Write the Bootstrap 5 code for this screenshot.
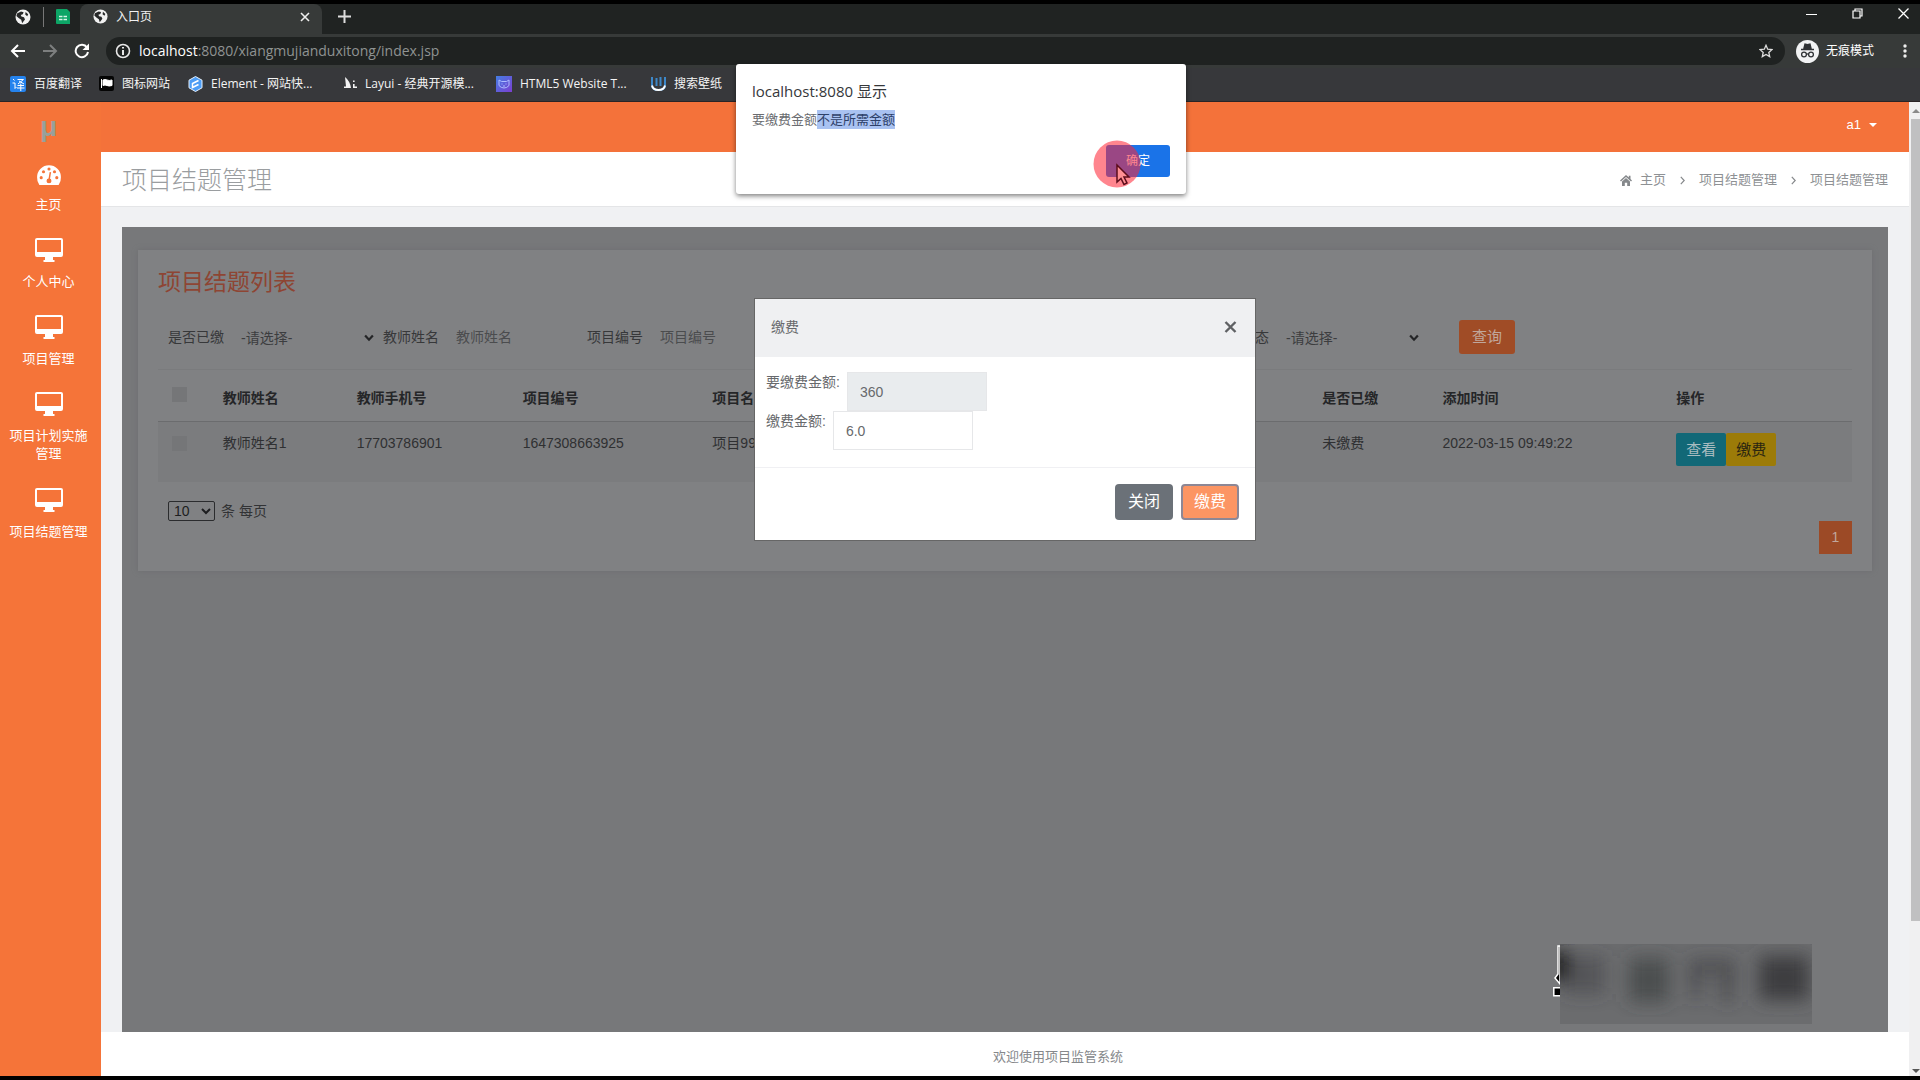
<!DOCTYPE html>
<html lang="zh-CN">
<head>
<meta charset="utf-8">
<meta name="viewport" content="width=device-width, initial-scale=1">
<title>入口页</title>
<link rel="stylesheet" href="https://cdn.jsdelivr.net/npm/bootstrap@5.3.0/dist/css/bootstrap.min.css">
<style>
body{font:14px/20px "Liberation Sans","Noto Sans CJK SC",sans-serif;color:#67696c;background:#000;height:100vh;padding:4px 0;overflow:hidden}
a{text-decoration:none;color:inherit}
svg{flex:none;display:block}
.ui-font{font-family:"Open Sans","Noto Sans CJK SC",sans-serif}
/* browser frame */
.tabstrip{height:30px;background:#202322}
.pinned{width:80px;gap:12px;padding:0 0 5px 15px}
.pinned hr{width:1px;height:20px;margin:0;background:#777;border:0;opacity:1}
.tab-active{width:242px;background:#373a39;border-radius:8px 8px 0 0;padding:0 10px 5px 13px;color:#f2f2f2;font-size:12px}
.icon-btn{background:none;border:0;padding:0;color:#fff;line-height:1}
.new-tab{padding:0 16px 5px}
.win-btns{gap:35px;padding-right:11px}
.toolbar{height:34px;background:#373a39;padding:3px 10px 3px;gap:16px}
.address{height:28px;border-radius:14px;background:#1f2221;padding:0 12px 0 9px;gap:8px;margin-right:-5px}
.url{font-size:14px;color:#8f9392}
.url b{font-weight:400;color:#fff}
.incog{font-size:12px;color:#fff;width:88px;gap:7px}
.bookmarks{height:34px;background:#37383b;font-size:12px;color:#f4f4f4;padding:0 10px 2px;border-bottom:1px solid #2a2426}
.bookmarks a{display:flex;align-items:center;gap:8px;white-space:nowrap}
/* application */
.app-main{background:#f0f1f3}
.side{width:101px;background:#f57439;color:#fff;font-size:13px;line-height:18px;text-align:center}
.side .logo-mu{font:bold 28px/32px "Liberation Sans",sans-serif;color:#98a09b;height:52px;padding-right:4px;padding-top:9px}
.side a{display:flex;flex-direction:column;align-items:center;gap:11px;height:77px;padding:9px 9px 0 5px}
.side a.home-link{height:75px}
.side a.two-line{height:96px}
.topbar{height:50px;background:#f4723a;padding:0 32px 4px 0;color:#fff;font-size:13px}
.pagehead{height:55px;background:#fff;padding:2px 21px 0;border-bottom:1px solid #e4e5e7}
.pagehead h1{font-size:25px;font-weight:300;color:#9a9da0;margin:0;line-height:36px}
.crumbs{font-size:13px;color:#8e9194;gap:14px}
.stage{background:#77787a;margin:20px 21px 0;padding:23px 16px}
.panel{background:#808183;height:321px;padding:18px 20px;box-shadow:0 0 5px #6d6e70}
.panel h2{font-size:23px;line-height:28px;color:#8e4533;margin:0 0 24px;font-weight:400}
.filters{padding-left:10px;height:34px;color:#37383a;white-space:nowrap}
.filters label{width:62px}
.filters input,.filters select{background:transparent;border:0;color:#3c3d3f;padding:0 11px;height:34px;width:142px;border-radius:0;outline:0}
.filters input::placeholder{color:#4b4c4e;opacity:1}
.filters .pick{position:relative}
.filters select{width:153px;appearance:none;padding-top:2px}
.filters .pick svg{position:absolute;right:9px;top:14px;pointer-events:none}
.filters .last-field{margin-left:422px}
.btn-main{background:#a04c26;color:#c0a79c;border:0;border-radius:3px;font-size:15px;line-height:22px;width:56px;height:34px;padding:0;margin-left:31px}
.btn-main:hover{background:#a04c26;color:#c0a79c}
.grid-table{table-layout:fixed;margin:15px 0 0;color:#2f3032;--bs-table-bg:transparent;--bs-table-color:#2f3032}
.grid-table>:not(caption)>*>*{padding:11px 12px 14px 14px;border:0;box-shadow:none;background:none;vertical-align:top}
.grid-table thead tr{height:52px;border-top:1px solid #7a7b7d;border-bottom:1px solid #6b6c6e}
.grid-table thead th{padding:18px 12px 13px 14px;color:#252628;font-weight:700}
.grid-table tbody tr{height:60px;background:#7b7c7e}
.tick{appearance:none;width:15px;height:15px;background:#757678;display:block;margin:3px 0 0}
.grid-table thead .tick{margin-top:-1px}
.act{border:0;font-size:15px;line-height:20px;padding:6px 10px;border-radius:2px;float:left;width:50px;height:33px}
.act-view{background:#126877;color:#a9bcc0}
.act-pay{background:#9c7b08;color:#2a2511}
.per-page{padding:19px 0 0 10px;gap:6px;color:#323335;height:39px}
.per-page select{width:47px;height:20px;font-size:14px;line-height:18px;padding:0 0 0 1px;background:transparent;border:1px solid #2b2c2e;border-radius:2px;color:#1d1e20}
.pager a{width:33px;height:33px;background:#9c4a26;color:#c0a79c}
.foot{height:44px;background:#fff;font-size:13px;color:#85888b;padding:5px 0 0 106px}
.sbar{width:11px;background:#f0f0f1;padding-left:2px}
.sbar .thumb{height:802px;background:#c0c0c1}
/* layers over the page */
.pay-modal{position:absolute;left:50%;top:196px;width:502px;margin-left:-251px;background:#fff;border:1px solid #666}
.pay-head{height:58px;background:#eff0f2;padding:0 18px 2px 16px}
.pay-body{padding:15px 11px 0;height:110px}
.pay-body label{white-space:nowrap;font-size:14px}
.pay-row{height:39px;gap:7px}
.pay-body input{width:140px;height:39px;border:1px solid #e6e7e9;padding:0 12px;color:#67696c;background:#fff;border-radius:0}
.pay-body input[readonly]{background:#e9ecee}
.pay-foot{border-top:1px solid #f0f0f3;height:73px;padding:16px 16px 0;gap:8px}
.pay-foot .btn{width:58px;height:36px;font-size:16px;line-height:22px;padding:0;border-radius:4px;color:#fff}
.b-close,.pay-foot .b-close:hover{background:#6b7178}
.b-pay,.pay-foot .b-pay:hover{background:#fc9563;border:2px solid #8d8795}
.alert-box{position:absolute;left:50%;top:64px;width:450px;height:130px;margin-left:-224px;background:#fff;border-radius:3px;padding:15px 16px 17px;box-shadow:0 2px 5px rgba(0,0,0,.5);z-index:5}
.alert-box h3{font-size:15px;line-height:24px;color:#35373a;margin:0 0 7px;font-weight:400}
.alert-box p{font-size:13px;line-height:19px;margin:0;color:#6a6c70}
.alert-box p span{background:#a9c2f1;color:#2d4068;display:inline-block}
.b-ok{width:64px;height:32px;background:#1a73e8;color:#fff;border:0;border-radius:3px;font-size:12px}
.click-dot{position:absolute;left:357px;top:76px}
.smudge{position:absolute;right:76px;bottom:8px}
</style>
<script src="https://cdn.jsdelivr.net/npm/bootstrap@5.3.0/dist/js/bootstrap.bundle.min.js"></script>
</head>
<body class="d-flex flex-column">
<svg width="0" height="0" class="position-absolute"><defs>
<symbol id="globe" viewBox="0 0 16 16"><circle cx="8" cy="8" r="7.5" fill="#f1f1f1"/><path d="M2 4.5 6 2.6l2.6.6-.8 2-2 .8.6 1.6 2.6.6 1 2.2-1.6 2.2-1.2 1.6-1-3.4L3.6 9 1.4 7z M10.6 3l2.6 2.2-1 2-2-1.6z" fill="#262828"/></symbol>
<symbol id="monitor" viewBox="0 0 28 24"><path fill="#fff" fill-rule="evenodd" d="M2 0h24q2 0 2 2v15q0 2-2 2h-8v3h1.500v2h-11v-2H10v-3H2q-2 0-2-2V2q0-2 2-2zm0 2v12h24V2z"/></symbol>
<symbol id="chev" viewBox="0 0 9 7"><path d="M1 1.200 4.500 5 8 1.200" fill="none" stroke="#242527" stroke-width="2"/></symbol>
</defs></svg>

<header class="ui-font flex-shrink-0">
  <div class="tabstrip d-flex">
    <div class="pinned d-flex align-items-center"><svg width="16" height="16"><use href="#globe"/></svg><hr><svg width="14" height="15"><path d="M1 0h10l3 3v12H1q-1 0-1-1V1q0-1 1-1z" fill="#0da566"/><path d="M3 7.500h3.500m1 0H11M3 10.500h3.500m1 0H11" stroke="#d8f4e6" stroke-width="1.500"/></svg></div>
    <div class="tab-active d-flex align-items-center gap-2"><svg width="15" height="15"><use href="#globe"/></svg><span class="flex-grow-1">入口页</span><button class="icon-btn" aria-label="关闭标签"><svg width="14" height="10"><path d="m3 1 8 8m0-8-8 8" stroke="#eee" stroke-width="1.600"/></svg></button></div>
    <button class="icon-btn new-tab" aria-label="新标签页"><svg width="13" height="13"><path d="M6.500 0v13M0 6.500h13" stroke="#ddd" stroke-width="2"/></svg></button>
    <div class="win-btns d-flex align-items-start pt-1 ms-auto">
      <button class="icon-btn" aria-label="最小化"><svg width="11" height="11"><path d="M0 6.500h11" stroke="#fff"/></svg></button>
      <button class="icon-btn" aria-label="还原"><svg width="11" height="11" fill="none" stroke="#fff" stroke-width="1.200"><path d="M1 3h7v7H1zM3 3V1h7v7H8"/></svg></button>
      <button class="icon-btn" aria-label="关闭"><svg width="11" height="11"><path d="m.5.5 10 10m0-10-10 10" stroke="#fff" stroke-width="1.300"/></svg></button>
    </div>
  </div>
  <div class="toolbar d-flex align-items-center">
    <button class="icon-btn" aria-label="后退"><svg width="16" height="14" fill="none" stroke="#fff" stroke-width="2"><path d="M15 7H2m6-6L2 7l6 6"/></svg></button>
    <button class="icon-btn" aria-label="前进"><svg width="16" height="14" fill="none" stroke="#7d7f7f" stroke-width="2"><path d="M1 7h13M8 1l6 6-6 6"/></svg></button>
    <button class="icon-btn" aria-label="刷新"><svg width="16" height="16" fill="none" stroke="#fff" stroke-width="2"><path d="M13 4.500A6.200 6.200 0 1 0 14 9"/><path d="M15 .5V7H8.500z" fill="#fff" stroke="none"/></svg></button>
    <div class="address d-flex align-items-center flex-grow-1">
      <svg width="16" height="16" fill="none" stroke="#e8e8e8" stroke-width="1.600"><circle cx="8" cy="8" r="6.500"/><path d="M8 7v5M8 4v1.600" stroke-width="2"/></svg>
      <span class="url flex-grow-1"><b>localhost</b>:8080/xiangmujianduxitong/index.jsp</span>
      <svg width="14" height="14" viewBox="0 0 14 14"><path d="m7 1.300 1.700 3.900 4.300.4-3.200 2.800.9 4.200L7 10.400l-3.700 2.200.9-4.200L1 5.600l4.300-.4z" fill="none" stroke="#ddd" stroke-width="1.300"/></svg>
    </div>
    <div class="incog d-flex align-items-center"><svg width="23" height="23"><circle cx="11.500" cy="11.500" r="11.500" fill="#f2f3f4"/><path d="M5 9.500h13M8 8l1-4 2.500.7L14 4l1 4z" stroke="#303336" stroke-width="1.300" fill="#303336"/><g fill="none" stroke="#303336" stroke-width="1.300"><circle cx="8" cy="14.500" r="2.400"/><circle cx="15" cy="14.500" r="2.400"/><path d="M10.400 14h2.200"/></g></svg><span>无痕模式</span></div>
    <button class="icon-btn" aria-label="菜单"><svg width="10" height="14" fill="#eee"><circle cx="5" cy="2" r="1.700"/><circle cx="5" cy="7" r="1.700"/><circle cx="5" cy="12" r="1.700"/></svg></button>
  </div>
  <nav class="bookmarks d-flex">
    <a href="#" style="width:89px"><svg width="16" height="16"><rect width="16" height="16" rx="2" fill="#2583ee"/><path d="m3 3 1.500 1.500M2.500 7H5v5.500L6.500 11M7.500 3.500h6L8 8m1-3 5 3M7.500 9.500H14M7 12h7.500M10.800 7.500V15" stroke="#fff" fill="none"/></svg>百度翻译</a>
    <a href="#" style="width:89px"><svg width="15" height="15"><rect width="15" height="15" rx="2" fill="#050505"/><path d="M2.500 3v9M4 4q2-1 4 0t5 0v5.500q-3 1-5 0t-4 0z" stroke="#fff" fill="#fff"/></svg>图标网站</a>
    <a href="#" style="width:156px"><svg width="15" height="16"><path d="m7.500.5 6.500 3.700v7.600l-6.500 3.700L1 11.800V4.200z" fill="#4d9df5" stroke="#e8f3ff"/><path d="m10.500 4.500-6 3v4l6-3" stroke="#fff" stroke-width="1.500" fill="none"/></svg>Element - 网站快...</a>
    <a href="#" style="width:152px"><svg width="13" height="13"><path d="M1 0q5 4 6 11H0v-1.500h2z" fill="#f3f3f3"/><path d="M9 3.500h1.600v1.600H9zM9 7h1.600v2.500H13V11H9z" fill="#f3f3f3"/></svg>Layui - 经典开源模...</a>
    <a href="#" style="width:155px"><svg width="16" height="16"><defs><linearGradient id="g" y2="1"><stop stop-color="#447ee3"/><stop offset="1" stop-color="#7b3fd0"/></linearGradient></defs><rect width="16" height="16" fill="url(#g)"/><path d="m3 4 2.500 1.500h5L13 4v5.500Q11 12 8 12T3 9.500zM5.500 8h1m3 0h1M7 10h2" fill="none" stroke="#aebcff"/></svg>HTML5 Website T...</a>
    <a href="#"><svg width="15" height="15" fill="none"><path d="M1 1v8q0 5 6.500 5T14 9V1" stroke="#3d88c9" stroke-width="2"/><path d="M5.500 2v8M9.500 1v9" stroke="#3d88c9" stroke-width="2"/><path d="M1 9.500Q2 14 7.500 14T14 9.500" stroke="#fff" stroke-width="2"/></svg>搜索壁纸</a>
  </nav>
</header>

<div class="d-flex flex-grow-1 overflow-hidden">
  <nav class="side flex-shrink-0">
    <div class="logo-mu">μ</div>
    <a href="#" class="home-link"><svg width="26" height="22" viewBox="0 0 26 24"><path d="M2.500 24A13 13 0 0 1 0 15.500 13 13 0 0 1 26 15.500 13 13 0 0 1 23.500 24z" fill="#fff"/><g fill="#f57439"><circle cx="4.500" cy="16" r="1.700"/><circle cx="7" cy="9.500" r="1.700"/><circle cx="13" cy="6.500" r="1.700"/><circle cx="19" cy="9.500" r="1.700"/><circle cx="21.500" cy="16" r="1.700"/><circle cx="13" cy="19.500" r="2.700"/></g><path d="m13 19 1.500-9" stroke="#f57439" stroke-width="1.600"/></svg>主页</a>
    <a href="#"><svg width="28" height="24"><use href="#monitor"/></svg>个人中心</a>
    <a href="#"><svg width="28" height="24"><use href="#monitor"/></svg>项目管理</a>
    <a href="#" class="two-line"><svg width="28" height="24"><use href="#monitor"/></svg>项目计划实施管理</a>
    <a href="#"><svg width="28" height="24"><use href="#monitor"/></svg>项目结题管理</a>
  </nav>
  <div class="app-main position-relative d-flex flex-column flex-grow-1">
    <div class="topbar d-flex align-items-center justify-content-end flex-shrink-0"><a href="#" class="d-flex align-items-center gap-2">a1<svg width="8" height="4"><path d="M0 0h8L4 4z" fill="#fff"/></svg></a></div>
    <div class="pagehead d-flex align-items-center justify-content-between flex-shrink-0">
      <h1>项目结题管理</h1>
      <nav class="crumbs d-flex align-items-center"><a href="#" class="d-flex align-items-center gap-2"><svg width="12" height="11" fill="#85888b"><path d="M6 0 0 5.500l1 1L6 2l5 4.500 1-1-1.500-1.400V.8H8.800v1.600zM2 6.500 6 3l4 3.500V11H7.200V7.800H4.800V11H2z"/></svg>主页</a><svg width="5" height="9"><path d="m.8.8 3.400 3.700L.8 8.200" fill="none" stroke="#85888b" stroke-width="1.200"/></svg><a href="#">项目结题管理</a><svg width="5" height="9"><path d="m.8.8 3.400 3.700L.8 8.200" fill="none" stroke="#85888b" stroke-width="1.200"/></svg><span>项目结题管理</span></nav>
    </div>
    <main class="stage position-relative flex-grow-1">
      <section class="panel">
        <h2>项目结题列表</h2>
        <form class="filters d-flex align-items-center">
          <label for="f1">是否已缴</label><div class="pick"><select id="f1"><option>-请选择-</option></select><svg width="10" height="8"><use href="#chev"/></svg></div>
          <label for="f2">教师姓名</label><input id="f2" placeholder="教师姓名">
          <label for="f3">项目编号</label><input id="f3" placeholder="项目编号">
          <label for="f6" class="last-field">项目状态</label><div class="pick"><select id="f6"><option>-请选择-</option></select><svg width="10" height="8"><use href="#chev"/></svg></div>
          <button type="button" class="btn btn-main">查询</button>
        </form>
        <table class="table grid-table">
          <colgroup><col style="width:3%"><col style="width:7.900%"><col style="width:9.800%"><col style="width:11.200%"><col style="width:36%"><col style="width:7.100%"><col style="width:13.800%"><col></colgroup>
          <thead><tr><th><input class="tick" type="checkbox" aria-label="全选"></th><th>教师姓名</th><th>教师手机号</th><th>项目编号</th><th>项目名称</th><th>是否已缴</th><th>添加时间</th><th>操作</th></tr></thead>
          <tbody><tr><td><input class="tick" type="checkbox" aria-label="选择"></td><td>教师姓名1</td><td>17703786901</td><td>1647308663925</td><td>项目999</td><td>未缴费</td><td>2022-03-15 09:49:22</td><td><button class="act act-view">查看</button><button class="act act-pay">缴费</button></td></tr></tbody>
        </table>
        <div class="per-page d-flex"><select id="pp" aria-label="每页条数"><option>10</option></select><label for="pp">条 每页</label></div>
        <nav class="pager d-flex justify-content-end"><a href="#" class="d-flex align-items-center justify-content-center">1</a></nav>
      </section>
      <svg class="smudge" width="259" height="80" viewBox="0 0 259 80" aria-hidden="true">
        <defs><filter id="soft" x="-30%" y="-30%" width="160%" height="160%"><feGaussianBlur stdDeviation="9"/></filter><clipPath id="patch"><path d="M7 0h252v80H7z"/></clipPath></defs>
        <path d="M5 2v28l-3 4 5 6V2z" fill="#000" stroke="#fff" stroke-width="1.500"/>
        <path d="M.8 43.800H8v8H.8z" fill="#000" stroke="#fff" stroke-width="1.500"/>
        <g clip-path="url(#patch)"><path d="M7 0h252v80H7z" fill="#6b6c6e"/>
          <g filter="url(#soft)" fill="#3c3d3f"><path d="M-5 8h20v28H-5z" fill="#111"/><path d="M10 12h42v38H10z" opacity=".5"/><path d="M76 14h40v44H76z" opacity=".65"/><path d="M136 16h46v12h-46zM138 24h10v30h-10zM168 24h12v34h-12z" opacity=".7"/><path d="M206 12h50v44h-50z"/></g>
        </g>
      </svg>
    </main>
    <footer class="foot d-flex align-items-center justify-content-center flex-shrink-0">欢迎使用项目监管系统</footer>

    <section class="pay-modal" role="dialog" aria-label="缴费">
      <div class="pay-head d-flex align-items-center justify-content-between"><span>缴费</span><button class="icon-btn" aria-label="关闭"><svg width="13" height="12"><path d="m1.500 1 10 10m0-10-10 10" stroke="#5f6164" stroke-width="2.400"/></svg></button></div>
      <div class="pay-body">
        <div class="pay-row d-flex"><label for="need">要缴费金额:</label><input id="need" value="360" readonly></div>
        <div class="pay-row d-flex"><label for="paid">缴费金额:</label><input id="paid" value="6.0"></div>
      </div>
      <div class="pay-foot d-flex justify-content-end"><button class="btn b-close">关闭</button><button class="btn b-pay">缴费</button></div>
    </section>
  </div>
  <div class="sbar d-flex flex-column flex-shrink-0"><svg width="9" height="17"><path d="m1 11 4-4 4 4z" fill="#8a8a8a"/></svg><div class="thumb"></div><svg class="mt-auto" width="9" height="10"><path d="m1 3 4 4 4-4z" fill="#555"/></svg></div>
</div>

<section class="alert-box d-flex flex-column" role="alertdialog" aria-label="提示">
  <h3 class="ui-font">localhost:8080 显示</h3>
  <p>要缴费金额<span>不是所需金额</span></p>
  <button class="b-ok ms-auto mt-auto">确定</button>
  <svg class="click-dot" width="48" height="48" viewBox="0 0 48 48"><circle cx="24" cy="24" r="23.500" fill="#ff2635" fill-opacity=".56"/><path d="M24 25v17l4-3.500 3 6 3-1.500-3-6h5z" fill="#ff8f93" stroke="#5c0c1a" stroke-width="1.500"/></svg>
</section>
</body>
</html>
